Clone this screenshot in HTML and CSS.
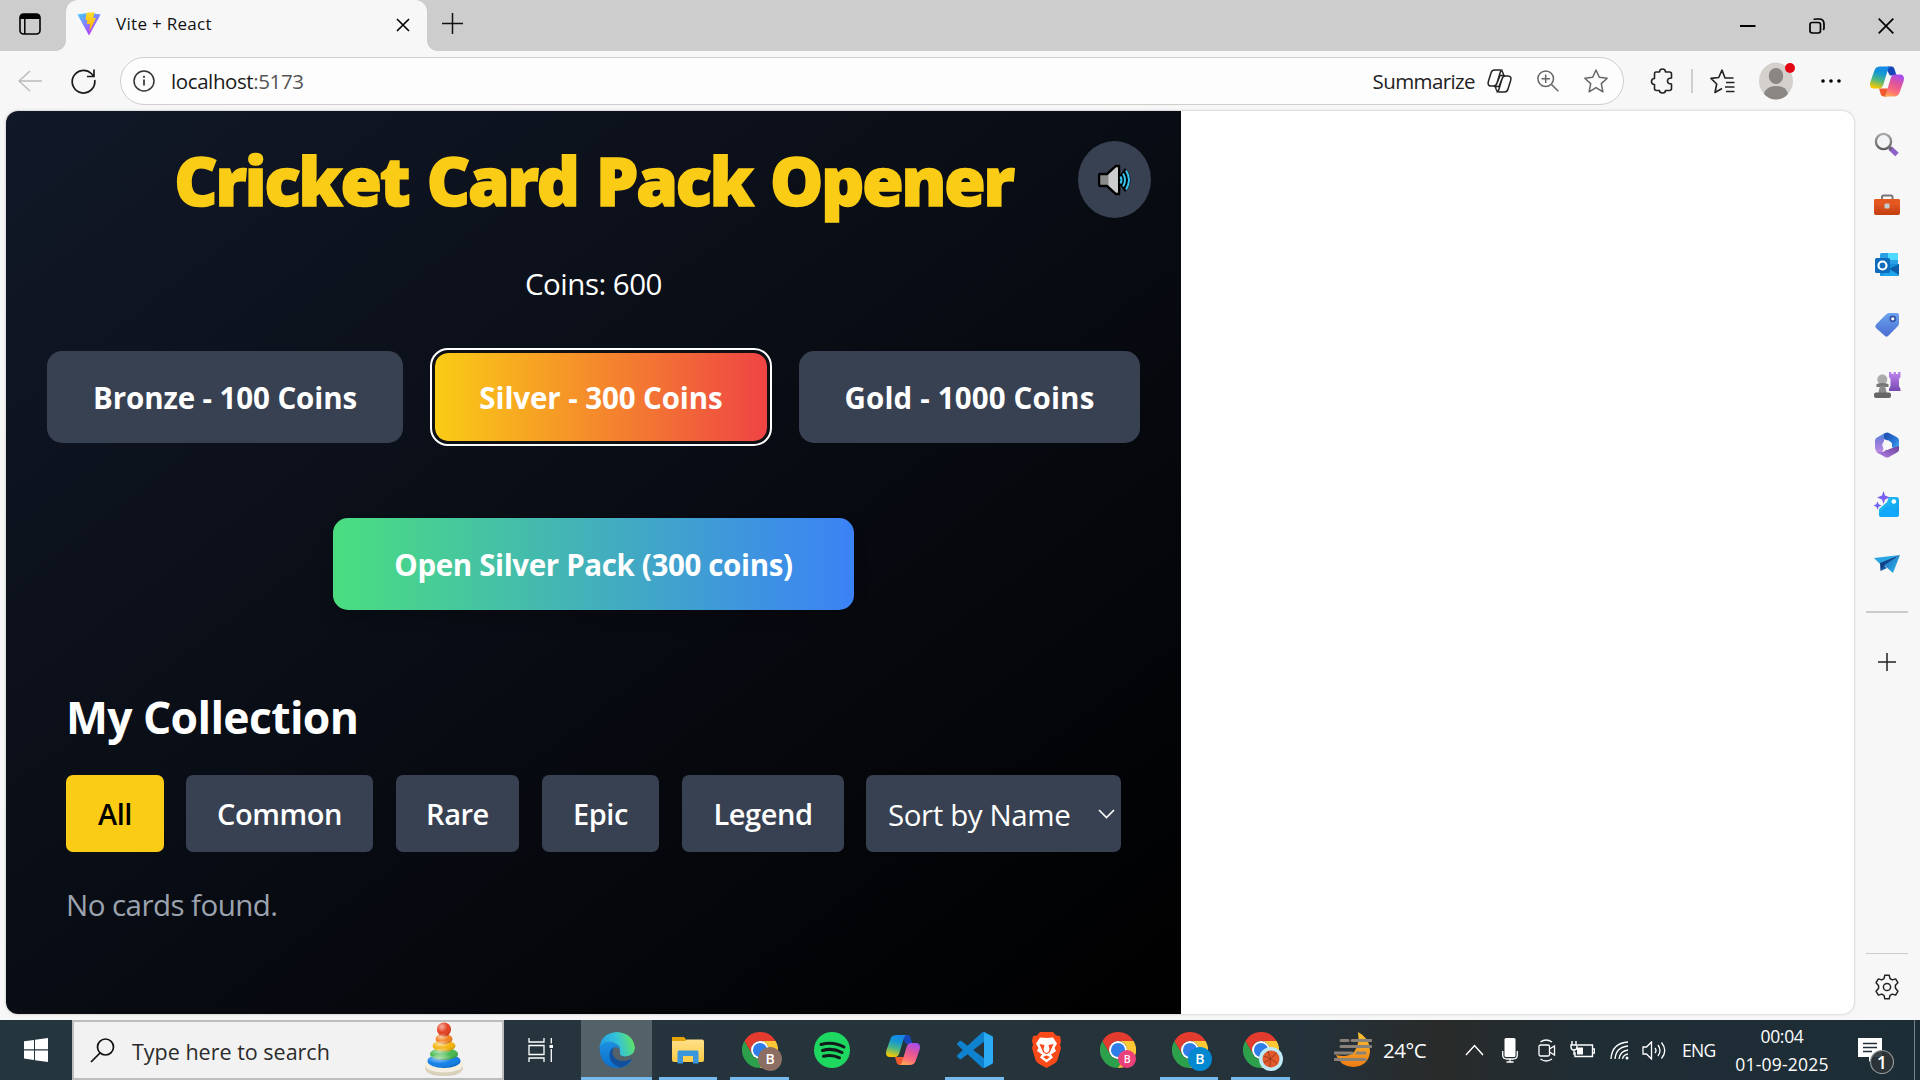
FILE: index.html
```html
<!DOCTYPE html>
<html lang="en">
<head>
<meta charset="utf-8">
<title>Vite + React</title>
<link rel="stylesheet" href="styles.css">
</head>
<body>
<svg class="defs" width="0" height="0" aria-hidden="true">
  <defs>
    <linearGradient id="cpA" x1="0.6" y1="0" x2="0.35" y2="1"><stop offset="0" stop-color="#1686e8"/><stop offset=".3" stop-color="#1497d4"/><stop offset=".62" stop-color="#4cb782"/><stop offset="1" stop-color="#fbc800"/></linearGradient>
    <linearGradient id="cpB" x1="0.7" y1="0" x2="0.35" y2="1"><stop offset="0" stop-color="#a74df0"/><stop offset=".4" stop-color="#e0549b"/><stop offset=".75" stop-color="#fb6d7a"/><stop offset="1" stop-color="#ffa256"/></linearGradient>
    <linearGradient id="edA" x1="0" y1=".5" x2="1" y2=".3"><stop offset="0" stop-color="#1d9de4"/><stop offset=".5" stop-color="#34c1dc"/><stop offset="1" stop-color="#63e85a"/></linearGradient>
    <linearGradient id="edB" x1="0" y1="0" x2="0" y2="1"><stop offset="0" stop-color="#1d8fe0"/><stop offset="1" stop-color="#0b70cf"/></linearGradient>
    <linearGradient id="viteA" x1="0" y1="0" x2=".6" y2="1"><stop offset="0" stop-color="#41d1ff"/><stop offset="1" stop-color="#bd34fe"/></linearGradient>
    <linearGradient id="viteB" x1="0" y1="0" x2="0" y2="1"><stop offset="0" stop-color="#ffde2f"/><stop offset="1" stop-color="#ffa800"/></linearGradient>
    <linearGradient id="moon" x1="0" y1="0" x2="0" y2="1"><stop offset="0" stop-color="#f8c431"/><stop offset="1" stop-color="#f07c14"/></linearGradient>
    <linearGradient id="purple" x1="0" y1="0" x2="0" y2="1"><stop offset="0" stop-color="#bf85ef"/><stop offset="1" stop-color="#7648b0"/></linearGradient>
    <linearGradient id="grey" x1="0" y1="0" x2="0" y2="1"><stop offset="0" stop-color="#a8a8a8"/><stop offset="1" stop-color="#606060"/></linearGradient>
    <linearGradient id="tag" x1="0" y1="0" x2="0" y2="1"><stop offset="0" stop-color="#6ba4ee"/><stop offset="1" stop-color="#4a6cd0"/></linearGradient>
    <linearGradient id="boxr" x1="0" y1="0" x2="0" y2="1"><stop offset="0" stop-color="#ee6430"/><stop offset="1" stop-color="#c33d0d"/></linearGradient>
    <linearGradient id="pic" x1="0" y1="0" x2="1" y2="1"><stop offset="0" stop-color="#25c4ee"/><stop offset="1" stop-color="#0d9bf2"/></linearGradient>
    <linearGradient id="plane" x1="0" y1="0" x2="1" y2="1"><stop offset="0" stop-color="#1b62b8"/><stop offset="1" stop-color="#30c0f2"/></linearGradient>
    <linearGradient id="folder" x1="0" y1="0" x2="0" y2="1"><stop offset="0" stop-color="#ffe08a"/><stop offset="1" stop-color="#fccb45"/></linearGradient>
    <linearGradient id="mL" x1="0" y1="0" x2="0" y2="1"><stop offset="0" stop-color="#3b8be0"/><stop offset=".45" stop-color="#8d7bd8"/><stop offset="1" stop-color="#c08be6"/></linearGradient>
    <linearGradient id="mR" x1="0" y1="0" x2="1" y2="1"><stop offset="0" stop-color="#1c49a8"/><stop offset=".6" stop-color="#2a7bdc"/><stop offset="1" stop-color="#58c2f4"/></linearGradient>
    <linearGradient id="mB" x1="0" y1="1" x2="1" y2="0"><stop offset="0" stop-color="#b583e2"/><stop offset="1" stop-color="#6a3f9e"/></linearGradient>
    <radialGradient id="shine" cx=".35" cy=".3" r=".7"><stop offset="0" stop-color="#fff" stop-opacity=".6"/><stop offset=".6" stop-color="#fff" stop-opacity="0"/><stop offset="1" stop-color="#000" stop-opacity=".15"/></radialGradient>
    <symbol id="copilot" viewBox="0 0 34 30">
      <path d="M18 0H21C24 0 24.500 2 25.300 5L26.500 9H20C17 4 16 2 18 0Z" fill="#1746b8"/>
      <path d="M9 22 L10.500 27C11 29 12 30 14 30H17L18 22Z" fill="#f0582d"/>
      <path d="M10.500 0H20.500C18.500 .8 18 2.500 17.300 5L13.700 17C12.800 20 11.800 22 8.500 22H4C0 22-.6 18.500 .5 15L4.300 4.200C5.300 1.200 7 0 10.500 0Z" fill="url(#cpA)"/>
      <path d="M23.500 30H13.500C15.500 29.200 16 27.500 16.700 25L20.300 13C21.200 10 22.200 8 25.500 8H30C34 8 34.600 11.500 33.500 15L29.700 25.800C28.700 28.800 27 30 23.500 30Z" fill="url(#cpB)"/>
    </symbol>
    <symbol id="chrome" viewBox="0 0 48 48">
      <path d="M3.200 12A24 24 0 0 1 44.800 12H24A12 12 0 0 0 13.600 30Z" fill="#e33b2e"/>
      <path d="M3.200 12L13.600 30A12 12 0 0 0 34.400 30L24 48A24 24 0 0 1 3.200 12Z" fill="#2da04b"/>
      <path d="M44.800 12A24 24 0 0 1 24 48L34.400 30A12 12 0 0 0 24 12Z" fill="#fcc934"/>
      <circle cx="24" cy="24" r="12" fill="#fff"/><circle cx="24" cy="24" r="9.400" fill="#2f7de9"/>
    </symbol>
  </defs>
</svg>

<div class="screen">
  <header class="tabstrip">
    <div class="tab-actions">
      <svg width="22" height="22" viewBox="0 0 22 22"><rect x="1" y="1" width="20" height="20" rx="3.500" fill="none" stroke="#000" stroke-width="1.600"/><path d="M1 6V4Q1 1 4 1H18Q21 1 21 4V6Z"/><path d="M5.800 5V21" stroke="#000" stroke-width="1.500"/></svg>
    </div>
    <div class="tab">
      <svg width="24" height="24" viewBox="0 0 24 24"><path d="M.5 2.500L12 .8L23.600 2.500L12 23.600Z" fill="url(#viteA)"/><path d="M9.500 1L17.500 0L16.200 6H19L12.500 19.500L13 12H9.800L10.300 8H8.500Z" fill="url(#viteB)"/></svg>
      <span class="tab-title">Vite + React</span>
      <svg class="tab-close" width="14" height="14" viewBox="0 0 14 14"><path d="M1 1L13 13M13 1L1 13" stroke="#000" stroke-width="1.600"/></svg>
    </div>
    <svg class="new-tab" width="21" height="21" viewBox="0 0 21 21"><path d="M10.500 0V21M0 10.500H21" stroke="#111" stroke-width="1.500"/></svg>
    <div class="window-controls">
      <svg width="16" height="16" viewBox="0 0 16 16"><path d="M0 8H15.500" stroke="#000" stroke-width="2"/></svg>
      <svg width="16" height="16" viewBox="0 0 16 16"><rect x="1" y="4.500" width="10.500" height="10.500" rx="2.200" fill="none" stroke="#000" stroke-width="1.700"/><path d="M4.500 1.500Q5 1 8 1H10Q15 1 15 6V10Q15 11 14.300 12" fill="none" stroke="#000" stroke-width="1.700"/></svg>
      <svg width="16" height="16" viewBox="0 0 16 16"><path d="M.7 .7L15.300 15.300M15.300 .7L.7 15.300" stroke="#000" stroke-width="1.700"/></svg>
    </div>
  </header>

  <div class="toolbar">
    <svg class="back" width="24" height="22" viewBox="0 0 24 22" fill="none" stroke="#bbb" stroke-width="1.500"><path d="M24 11H1M12 1L1 11L12 21"/></svg>
    <svg class="reload" width="25" height="25" viewBox="0 0 25 25" fill="none" stroke="#1a1a1a" stroke-width="1.700"><path d="M23.700 11A11.300 11.300 0 1 1 20.300 4.500L23 7.500M23 .5V7.500H16"/></svg>
    <div class="address">
      <svg width="22" height="22" viewBox="0 0 22 22"><circle cx="11" cy="11" r="10" fill="none" stroke="#333" stroke-width="1.500"/><path d="M11 9.500V15.500" stroke="#333" stroke-width="1.700"/><circle cx="11" cy="6.800" r="1.100" fill="#333"/></svg>
      <span class="url">localhost<i>:5173</i></span>
      <span class="summarize">Summarize</span>
      <svg class="ic-cp" width="25" height="24" viewBox="0 0 25 24" fill="none" stroke="#222" stroke-width="1.500"><path d="M7.500 1H13C15.500 1 16 3 16.500 6M7.500 1C5.500 1 4.500 2 4 4L1.500 12C.5 15.500 1.500 17 4 17H6.500C8.500 17 9.500 16 10 14L13 4C13.500 2 14 1 15.500 1M17.500 23H12C9.500 23 9 21 8.500 18M17.500 23C19.500 23 20.500 22 21 20L23.500 12C24.500 8.500 23.500 7 21 7H18.500C16.500 7 15.500 8 15 10L12 20C11.500 22 11 23 9.500 23M10.500 13L13 6.500H18M7 17.500H12L14.500 11"/></svg>
      <svg class="ic-zoom" width="22" height="22" viewBox="0 0 22 22" fill="none" stroke="#666" stroke-width="1.500"><circle cx="8.700" cy="8.700" r="7.800"/><path d="M14.500 14.500L21.300 21.300M8.700 4.500V13M4.500 8.700H13"/></svg>
      <svg class="ic-star" width="24" height="24" viewBox="0 0 24 24" fill="none" stroke="#666" stroke-width="1.500" stroke-linejoin="round"><path d="M12 1L15.300 8.300L23.200 9.200L17.300 14.600L18.900 22.800L12 18.600L5.100 22.800L6.700 14.600L.8 9.200L8.700 8.300Z"/></svg>
    </div>
    <svg class="ic-ext" width="24" height="26" viewBox="0 0 24 26" fill="none" stroke="#222" stroke-width="1.600" stroke-linejoin="round"><path d="M6 4H9.500C9.500 2 10.500 1 12.500 1S15.500 2 15.500 4H19.500Q21.500 4 21.500 6V10C19 10 17.500 11 17.500 13S19 16 21.500 16V20.500Q21.500 22.500 19.500 22.500H15.500C15.500 24.500 14.500 25 12.500 25S9.500 24.500 9.500 22.500H6.500Q4.500 22.500 4.500 20.500V16.500C2.500 16.500 1.500 15.500 1.500 13.500S2.500 10.500 4.500 10.500V6Q4.500 4 6 4"/></svg>
    <span class="divider"></span>
    <svg class="ic-fav" width="25" height="25" viewBox="0 0 25 25" fill="none" stroke="#222" stroke-width="1.600" stroke-linejoin="round"><path d="M23.500 9H15L12 1L8.700 8.500L1 9.400L6.700 15L5 23.500L12 19.500M16 13.500H24.500M15 18H24.500M16 22.500H24.500" /></svg>
    <div class="avatar">
      <svg width="34" height="38" viewBox="0 0 34 38"><ellipse cx="17" cy="19" rx="17" ry="18.500" fill="#d4d1cd"/><ellipse cx="17" cy="14" rx="7.200" ry="8" fill="#8a8683"/><path d="M5 32Q7 24 17 24T29 32Q24 37.500 17 37.500T5 32" fill="#8a8683"/></svg>
      <span class="dot"></span>
    </div>
    <svg class="ic-more" width="20" height="4" viewBox="0 0 20 4"><circle cx="2" cy="2" r="1.800"/><circle cx="10" cy="2" r="1.800"/><circle cx="18" cy="2" r="1.800"/></svg>
    <svg class="ic-copilot" width="34" height="31"><use href="#copilot"/></svg>
  </div>

  <div class="body">
    <main class="viewport">
      <section class="app">
        <button class="sound" aria-label="Sound"><svg width="36" height="32" viewBox="0 0 36 32"><path d="M2 10H9L18 2H21V30H18L9 22H2Q1 22 1 20V12Q1 10 2 10Z" fill="#8b8b8b" stroke="#000" stroke-width="2.500" stroke-linejoin="round"/><path d="M10.500 10.500L18 3.500H20V28.500H18L10.500 21.500Z" fill="#cdcdcd"/><path d="M22 11L27 4Q38 16 27 28L22 21Z" fill="#000"/><path d="M22.500 12.500Q24.500 16 22.500 19.500M25 9.500Q29 16 25 22.500M28 6.500Q34 16 28 25.500" fill="none" stroke="#35c5f0" stroke-width="2"/></svg></button>
        <h1>Cricket Card Pack Opener</h1>
        <p class="coins">Coins: 600</p>
        <div class="packs">
          <button class="pack bronze">Bronze - 100 Coins</button>
          <button class="pack silver">Silver - 300 Coins</button>
          <button class="pack gold">Gold - 1000 Coins</button>
        </div>
        <button class="open">Open Silver Pack (300 coins)</button>
        <h2>My Collection</h2>
        <div class="filters">
          <button class="filter all">All</button>
          <button class="filter common">Common</button>
          <button class="filter rare">Rare</button>
          <button class="filter epic">Epic</button>
          <button class="filter legend">Legend</button>
          <div class="sort"><span>Sort by Name</span><svg width="17" height="10" viewBox="0 0 17 10"><path d="M1 1L8.500 8.500L16 1" fill="none" stroke="#fff" stroke-width="1.600"/></svg></div>
        </div>
        <p class="empty">No cards found.</p>
      </section>
    </main>
    <aside class="sidebar">
      <div class="slot"><svg width="26" height="26" viewBox="0 0 26 26"><path d="M16 16L23 22.500" stroke="#8f5fca" stroke-width="5"/><path d="M14.500 14.500L17.500 17.500" stroke="#666" stroke-width="2.500"/><circle cx="9.500" cy="9.500" r="7.600" fill="#f2f4f6" stroke="url(#grey)" stroke-width="2.400"/></svg></div>
      <div class="slot"><svg width="28" height="24" viewBox="0 0 28 24"><path d="M9 7V4Q9 2.500 10.500 2.500H18Q19.500 2.500 19.500 4V7" fill="none" stroke="#777" stroke-width="2"/><rect x="1" y="6" width="26" height="16" rx="2" fill="url(#boxr)"/><rect x="1" y="6" width="26" height="6" rx="1.500" fill="#e4571f"/><rect x="11.500" y="10.500" width="5" height="5" rx="1" fill="#c3ccd0"/></svg></div>
      <div class="slot"><svg width="26" height="26" viewBox="0 0 26 26"><rect x="6" y="1" width="18" height="12" rx="1.500" fill="#2a9fe6"/><rect x="14" y="1" width="10" height="7" fill="#50d9ff"/><path d="M6 12H25V23Q25 24 24 24H7Q6 24 6 23Z" fill="#1490df"/><path d="M25 12V23L15 17Z" fill="#0c5ea8"/><path d="M25 23L15 17L7 24H24Z" fill="#1da4ea"/><rect x="1" y="6" width="15" height="15" rx="1.500" fill="#0f6cbd"/><circle cx="8.500" cy="13.500" r="4" fill="none" stroke="#fff" stroke-width="2.200"/></svg></div>
      <div class="slot"><svg width="26" height="26" viewBox="0 0 26 26"><path d="M15 1H23Q25 1 25 3V11Q25 13 24 14L14 24Q12.500 25.500 11 24L2 16Q.5 14.500 2 12.500L12 2.500Q13.500 1 15 1Z" fill="url(#tag)"/><circle cx="18.800" cy="6.800" r="2.500" fill="#fff" stroke="#3454a4" stroke-width="1.800"/></svg></div>
      <div class="slot"><svg width="28" height="28" viewBox="0 0 28 28"><path d="M16 1H18.500V3H20.500V1H23V3H25V1H27.500V6L26 8V15L27.500 18V20H16V18L17.500 15V8L16 6Z" fill="url(#purple)"/><circle cx="9.300" cy="8.500" r="5" fill="#aaa"/><path d="M3.500 13Q9.500 11 15.500 13V16H3.500Z" fill="#777"/><path d="M7 15H12L14 23H5Z" fill="#8a8a8a"/><rect x="1" y="21.500" width="17" height="5.500" rx="2" fill="#666"/></svg></div>
      <div class="slot"><svg width="26" height="28" viewBox="0 0 26 28"><path d="M11 2Q13 1 15 2L10 6V16L8 22L3 20.500Q1 19.500 1 17V9.500Q1 7.500 3 6.500Z" fill="url(#mL)"/><path d="M10 3L12 2Q13 1.400 15 2L23 6.300Q25 7.500 25 9.500V18Q25 20 23 21L18 16V12L10 8Z" fill="url(#mR)"/><path d="M2 20Q8 23 12 19L25 15V18.500Q25 20.500 23 21.600L15 26Q13 27 11 26L3 21.600Z" fill="url(#mB)"/><circle cx="13" cy="14" r="4.700" fill="#f7f7f7"/></svg></div>
      <div class="slot"><svg width="28" height="28" viewBox="0 0 28 28"><path d="M16 6H23Q26 6 26 9V23Q26 26 23 26H8Q6 26 6 23V18L14 11Z" fill="url(#pic)"/><path d="M6 23L13 16Q15.500 14 18 16L26 23Q26 26 23 26H8Q6 26 6 23Z" fill="#12a7fa"/><circle cx="20.800" cy="10.500" r="2.300" fill="#fff"/><path d="M10.500 0L12 4.500L17 6.500L12 8.500L10.500 13L9 8.500L4 6.500L9 4.500Z" fill="#7a5ff0"/><path d="M4.500 10.500L5.700 13.300L8.500 14.500L5.700 15.700L4.500 18.500L3.300 15.700L.5 14.500L3.300 13.300Z" fill="#6a63f0"/></svg></div>
      <div class="slot"><svg width="28" height="20" viewBox="0 0 28 20"><path d="M1 3L27 0L7 9Z" fill="#2aa5e2"/><path d="M7 8L27 0L11 12L7.500 16Z" fill="#123f86"/><path d="M11 10L27 0L20 18Z" fill="url(#plane)"/><path d="M7.500 16L11 11L14 13Z" fill="#0c5a9e"/></svg></div>
      <span class="rule"></span>
      <svg class="add" width="18" height="18" viewBox="0 0 18 18"><path d="M9 0V18M0 9H18" stroke="#222" stroke-width="1.500"/></svg>
      <span class="rule last"></span>
      <svg class="gear" width="26" height="26" viewBox="0 0 26 26" fill="none" stroke="#222" stroke-width="1.500" stroke-linejoin="round"><path d="M10.800 1.200H15.200L16 4.600L18.300 5.900L21.600 4.900L23.900 8.700L21.400 11.200V14L23.900 17.300L21.600 21.100L18.300 20.100L16 21.400L15.200 24.800H10.800L10 21.400L7.700 20.100L4.400 21.100L2.100 17.300L4.600 14.300V11.700L2.100 8.700L4.400 4.900L7.700 5.900L10 4.600Z"/><circle cx="13" cy="13" r="3.600"/></svg>
    </aside>
  </div>

  <footer class="taskbar">
    <div class="start"><svg width="24" height="24" viewBox="0 0 24 24" fill="#fff"><path d="M0 3.300L10 1.900V11.300H0ZM11 1.700L24 0V11.300H11ZM0 12.400H10V22L0 20.600ZM11 12.400H24V24L11 22.300Z"/></svg></div>
    <div class="search">
      <svg width="25" height="25" viewBox="0 0 25 25" fill="none" stroke="#111" stroke-width="1.700"><circle cx="15.500" cy="9" r="8"/><path d="M10 15L1 24"/></svg>
      <span>Type here to search</span>
      <svg class="toy" width="40" height="56" viewBox="0 0 40 56"><path d="M1 42H39V46Q38 54 20 54T1 46Z" fill="#d8d2bd"/><ellipse cx="20" cy="43" rx="19" ry="7.500" fill="#f3eee0"/><ellipse cx="20" cy="39" rx="16.500" ry="7" fill="#117fe8"/><ellipse cx="20" cy="32" rx="14" ry="6" fill="#46b94d"/><ellipse cx="20" cy="24" rx="11.500" ry="5.500" fill="#f3b40c"/><ellipse cx="20" cy="17" rx="8.500" ry="5" fill="#f58220"/><circle cx="20" cy="7.500" r="7" fill="#e54120"/><g fill="url(#shine)"><ellipse cx="20" cy="39" rx="16.500" ry="7"/><ellipse cx="20" cy="32" rx="14" ry="6"/><ellipse cx="20" cy="24" rx="11.500" ry="5.500"/><ellipse cx="20" cy="17" rx="8.500" ry="5"/><circle cx="20" cy="7.500" r="7"/></g></svg>
    </div>
    <div class="taskview"><svg width="25" height="24" viewBox="0 0 25 24" fill="none" stroke="#fff" stroke-width="1.300"><path d="M1 0V4H16V0M1 24V20H16V24M1 7.500H16V16.500H1ZM23.300 0V5.500M23.300 11V24"/><path d="M21.500 7H25V10H21.500Z" fill="#fff" stroke="none"/></svg></div>
    <nav class="apps">
      <div class="app-slot active running"><svg width="36" height="36" viewBox="0 0 36 36"><path d="M.5 16Q2 1 18 0Q34 1 36 16Q35 24 26 24.500Q20 24 21 20Q22 12 12 10Q4 10 .5 16Z" fill="url(#edA)"/><path d="M.5 15Q5 9 12 10Q20 11 21 18Q17 12 13 18Q11 28 22 31Q28 32 33 28Q28 36 18 36Q1 35 .5 15Z" fill="url(#edB)"/><path d="M15 15Q12 20 15 25Q21 32 33 27Q29 34 21 35.500Q10 32 10.500 22Q11 17 15 15Z" fill="#124f9c"/></svg></div>
      <div class="app-slot running"><svg width="34" height="28" viewBox="0 0 34 28"><path d="M1 1H13L15.500 4H32V10H1Z" fill="#e5a50a"/><path d="M1 5H14L16 3.500H31Q33 3.500 33 5.500V24Q33 26 31 26H3Q1 26 1 24Z" fill="url(#folder)"/><path d="M6.500 27.500V16Q6.500 14.500 8 14.500H26Q27.500 14.500 27.500 16V27.500H22V20H12V27.500Z" fill="#3a96dd"/></svg></div>
      <div class="app-slot running"><svg width="36" height="36"><use href="#chrome"/></svg><b class="badge brown">B</b></div>
      <div class="app-slot"><svg width="36" height="36" viewBox="0 0 36 36"><circle cx="18" cy="18" r="18" fill="#1ed760"/><path d="M7 12.500Q19 9 30 15M8.500 18.500Q18.500 15.500 28 20.500M9.500 24.300Q18 22 25.500 25.800" fill="none" stroke="#12191b" stroke-width="3" stroke-linecap="round"/></svg></div>
      <div class="app-slot"><svg width="34" height="30"><use href="#copilot"/></svg></div>
      <div class="app-slot running"><svg width="36" height="36" viewBox="0 0 24 24"><path d="M23.150 2.587L18.210.21a1.494 1.494 0 0 0-1.705.29l-9.460 8.630-4.120-3.128a.999.999 0 0 0-1.276.057L.327 7.261A1 1 0 0 0 .326 8.740L3.899 12 .326 15.260a1 1 0 0 0 .001 1.479L1.650 17.940a.999.999 0 0 0 1.276.057l4.120-3.128 9.460 8.630a1.492 1.492 0 0 0 1.704.29l4.942-2.377A1.500 1.500 0 0 0 24 20.060V3.939a1.500 1.500 0 0 0-.85-1.352zm-5.146 14.861L10.826 12l7.178-5.448v10.896z" fill="#0f82cf"/><path d="M18 0L23.150 2.587Q24 3 24 3.939V20.060Q24 21 23.150 21.400L18 24Z" fill="#2aaaf2"/></svg></div>
      <div class="app-slot"><svg width="31" height="36" viewBox="0 0 31 36"><path d="M9 0H22L25 3.500L29 4L30 9L29 13L30 16L26.500 28Q25.500 30 23.500 31.500L15.500 36L7.500 31.500Q5.500 30 4.500 28L1 16L2 13L1 9L2 4L6 3.500Z" fill="#fb4a1a"/><path d="M15.500 6L22 5.500L26 11.500L23.500 16L25 19L20 22.500L22 25.500L15.500 30.500L9 25.500L11 22.500L6 19L7.500 16L5 11.500L9 5.500Z" fill="#fff"/><path d="M8.500 12L13.500 13L12.500 17L13.500 20L15.500 21L17.500 20L18.500 17L17.500 13L22.500 12L21 15.500L18.700 20.500L15.500 22.300L12.300 20.500L10 15.500ZM12 25L15.500 23.500L19 25L15.500 27.500Z" fill="#fb4a1a"/></svg></div>
      <div class="app-slot"><svg width="36" height="36"><use href="#chrome"/></svg><b class="badge pink">B</b></div>
      <div class="app-slot running"><svg width="36" height="36"><use href="#chrome"/></svg><b class="badge blue">B</b></div>
      <div class="app-slot running"><svg width="36" height="36"><use href="#chrome"/></svg><span class="badge ball"><svg width="24" height="24" viewBox="0 0 24 24"><circle cx="12" cy="12" r="12" fill="#bdeaf5"/><circle cx="12" cy="12" r="8.500" fill="#e2592b"/><path d="M4.500 9Q12 10 18.500 17M9 4Q13 12 11 20M17.500 5.500Q13 12 5 16" fill="none" stroke="#8a3418" stroke-width=".8"/></svg></span></div>
    </nav>
    <div class="weather">
      <svg width="38" height="36" viewBox="0 0 38 36"><path d="M24 0Q36 6 36 19Q35 34 19 35Q6 34 2 23Q14 26 20 20Q26 12 24 0Z" fill="url(#moon)"/><path d="M7 8.500H14M18 8.500H37M7 14.500H37M1 21H18M23 21H31M1 27.500H31" stroke="#8a8178" stroke-width="3" stroke-linecap="round"/></svg>
      <span>24°C</span>
    </div>
    <div class="tray">
      <svg class="t-chev" width="19" height="12" viewBox="0 0 19 12"><path d="M1 11L9.500 1.500L18 11" fill="none" stroke="#fff" stroke-width="1.500"/></svg>
      <svg class="t-mic" width="16" height="25" viewBox="0 0 16 25"><rect x="2.500" y="0" width="11" height="19" rx="1.500" fill="#fff"/><path d="M.7 13V17Q.7 21 5 21H11Q15.300 21 15.300 17V13M8 21V24M4.500 24H11.500" fill="none" stroke="#fff" stroke-width="1.300"/></svg>
      <svg class="t-cam" width="18" height="23" viewBox="0 0 18 23" fill="none" stroke="#fff" stroke-width="1.300"><rect x="1" y="6" width="10.500" height="11" rx="1.500"/><path d="M11.500 10L16.500 7V16L11.500 13M2.500 3Q8 -1 14 3M2.500 20Q8 24 14 20"/></svg>
      <svg class="t-bat" width="25" height="18" viewBox="0 0 25 18" fill="none" stroke="#fff" stroke-width="1.400"><path d="M8 4H22.500V15.500H5V11M23 8H24.500V12H23"/><path d="M7 6.500H13V13.500H7Z" fill="#fff" stroke="none"/><path d="M2 0V4M6 0V4M1 4H7V6Q7 9 4 9T1 6ZM4 9V14" /></svg>
      <svg class="t-wifi" width="19" height="19" viewBox="0 0 19 19" fill="none" stroke="#fff" stroke-width="1.300"><path d="M1 18Q2 2 18 1M5 18Q6 6 18 5M9 18Q10 10 18 9" /><path d="M12.500 18Q13 14 18 13" /><circle cx="17" cy="17" r="1.500" fill="#fff" stroke="none"/></svg>
      <svg class="t-vol" width="24" height="19" viewBox="0 0 24 19" fill="none" stroke="#fff" stroke-width="1.300"><path d="M1 6H4.500L9.500 1V18L4.500 13H1ZM13 7Q15 9.500 13 12M16 4Q20 9.500 16 15M19.500 1.500Q26 9.500 19.500 17.500"/></svg>
      <span class="t-lang">ENG</span>
      <div class="clock"><span>00:04</span><span class="date">01-09-2025</span></div>
      <div class="notify"><svg width="36" height="36" viewBox="0 0 36 36"><path d="M0 0H24V19H15L11 24V19H0Z" fill="#fff"/><path d="M5 5.500H19M5 9.500H19M5 13.500H14" stroke="#213038" stroke-width="1.300"/><circle cx="24" cy="24" r="11.500" fill="#2c3437" fill-opacity=".93" stroke="#929799" stroke-width="1.200"/></svg><b>1</b></div>
    </div>
  </footer>
</div>
</body>
</html>
```
FILE: styles.css
```css
* { box-sizing: border-box; margin: 0; padding: 0; }
body { width: 1920px; height: 1080px; overflow: hidden; font-family: "Open Sans", "Noto Sans", sans-serif; background: #f7f7f7; color: #111; }
svg { display: block; flex: none; }
button { border: 0; font: inherit; color: inherit; }
span { white-space: nowrap; }
.defs { position: absolute; }
.screen { display: flex; flex-direction: column; width: 1920px; height: 1080px; }

.tabstrip { display: flex; align-items: center; height: 51px; background: radial-gradient(circle at 10px 0, #cdcdcd 9.500px, #f7f7f7 10px) 427px 41px / 10px 10px no-repeat, #cdcdcd; }
.tab-actions { width: 66px; height: 51px; padding: 13px 0 0 19px; background: radial-gradient(circle at 0 0, #cdcdcd 9.500px, #f7f7f7 10px) 56px 41px / 10px 10px no-repeat; }
.tab { display: flex; align-items: center; width: 361px; height: 51px; padding: 0 17px 3px 11px; background: #f7f7f7; border-radius: 12px 12px 0 0; }
.tab-title { margin: -2px 0 0 15px; font-size: 17px; letter-spacing: 0.3px; color: #111; }
.tab-close { margin-left: auto; margin-top: 2px; }
.new-tab { margin: -4px 0 0 15px; }
.window-controls { display: flex; gap: 53px; margin-left: auto; padding-right: 26px; }

.toolbar { display: flex; align-items: center; height: 60px; padding: 0 16px 0 18px; background: #f7f7f7; }
.reload { margin-left: 29px; }
.address { display: flex; align-items: center; width: 1504px; height: 48px; margin-left: 24px; padding: 0 15px 0 12px; border: 1.500px solid #cfcfcf; border-radius: 24px; background: #fdfdfd; }
.url { margin-left: 16px; font-size: 20.500px; letter-spacing: -0.4px; color: #1a1a1a; }
.url i { font-style: normal; color: #555; }
.summarize { margin-left: auto; font-size: 20.500px; color: #222; letter-spacing: -0.6px; }
.ic-cp { margin-left: 12px; }
.ic-zoom { margin-left: 25px; }
.ic-star { margin-left: 25px; }
.ic-ext { margin-left: 26px; }
.divider { width: 2px; height: 24px; margin-left: 17px; background: #cfcfcf; }
.ic-fav { margin-left: 17px; }
.avatar { position: relative; margin-left: 24px; }
.dot { position: absolute; right: -2px; top: 1px; width: 10px; height: 10px; border-radius: 50%; background: #e30613; }
.ic-more { margin-left: 28px; }
.ic-copilot { margin-left: auto; }

.body { display: flex; height: 909px; }
.viewport { display: flex; width: 1848px; height: 903px; margin-left: 6px; background: #fff; border-radius: 12px; overflow: hidden; box-shadow: 0 0 2px 1px #d8d8d8; }
.app { position: relative; display: flex; flex-direction: column; align-items: center; width: 1175px; height: 903px; padding-top: 31px; background: linear-gradient(to bottom right, #111827, #000); color: #fff; }
.sound { position: absolute; top: 30px; right: 30px; display: flex; align-items: center; justify-content: center; width: 73px; height: 77px; padding-left: 2px; border-radius: 50%; background: #384152; }
h1 { height: 76px; line-height: 77px; font-size: 67px; font-weight: 800; letter-spacing: -2.150px; word-spacing: 3px; color: #facc15; -webkit-text-stroke: 1.600px #facc15; white-space: nowrap; }
.coins { height: 45px; margin-top: 43px; line-height: 45px; font-size: 29.500px; letter-spacing: -0.5px; }
.packs { display: flex; gap: 30px; margin-top: 45px; }
.pack { height: 92px; padding-top: 1px; border-radius: 15px; background: #384152; font-size: 29.500px; font-weight: 700; white-space: nowrap; letter-spacing: -0.1px; }
.bronze { width: 356px; }
.silver { width: 336px; border: 2px solid #111; background: linear-gradient(to right, #facc15, #ef4444) padding-box; outline: 2px solid #fff; outline-offset: 1px; }
.gold { width: 341px; letter-spacing: 0.150px; }
.open { width: 521px; height: 92px; margin-top: 75px; padding-top: 1px; border-radius: 15px; background: linear-gradient(to right, #4ade80, #3b82f6); font-size: 29.500px; font-weight: 700; letter-spacing: -0.360px; white-space: nowrap; box-shadow: 0 10px 15px rgba(0,0,0,.15); }
h2 { align-self: flex-start; height: 60px; margin: 77px 0 0 60px; line-height: 60px; font-size: 44.500px; font-weight: 700; letter-spacing: -0.650px; white-space: nowrap; }
.filters { display: flex; gap: 23px; align-self: flex-start; margin: 28px 0 0 60px; }
.filter { height: 77px; border-radius: 7px; background: #384152; font-size: 29px; font-weight: 600; letter-spacing: -0.450px; }
.all { width: 98px; margin-right: -1px; background: #facc15; color: #000; }
.common { width: 187px; }
.rare { width: 123px; }
.epic { width: 117px; }
.legend { width: 162px; margin-right: -1px; }
.sort { display: flex; align-items: center; justify-content: space-between; width: 255px; height: 77px; padding: 0 6px 0 22px; border-radius: 7px; background: #384152; font-size: 29.500px; letter-spacing: -0.4px; }
.sort span { padding-top: 2px; }
.empty { align-self: flex-start; height: 45px; margin: 30px 0 0 60px; line-height: 45px; font-size: 29.500px; letter-spacing: -0.540px; color: #9ca3af; }

.sidebar { display: flex; flex-direction: column; align-items: center; width: 65px; padding: 4px 0 0; }
.slot { display: flex; align-items: center; justify-content: center; width: 60px; height: 60px; }
.rule { width: 42px; height: 1.500px; margin-top: 16px; background: #cbcbcb; }
.add { margin-top: 40px; }
.rule.last { margin-top: auto; }
.gear { margin: 20px 0 20px; }

.taskbar { display: flex; width: 1920px; height: 60px; color: #fff; background: linear-gradient(90deg, #25353e 0%, #25343d 30%, #26333a 60%, #24323b 68%, #292b2a 75%, #1f2d35 83%, #1d2d36 100%); }
.start { width: 72px; padding: 18px 0 0 24px; }
.search { display: flex; align-items: center; width: 432px; border: 2px solid #bdbdbd; background: #f2f2f2; color: #2b2b2b; padding-left: 16px; }
.search span { margin-left: 17px; padding-top: 2px; font-size: 21.500px; letter-spacing: 0; }
.toy { margin-left: auto; margin-right: 38px; }
.taskview { width: 77px; padding: 18px 0 0 24px; }
.apps { display: flex; width: 716px; }
.app-slot { position: relative; display: flex; align-items: center; justify-content: center; width: 71.600px; height: 60px; flex: none; }
.app-slot.running::after { content: ""; position: absolute; left: 6px; right: 7px; bottom: 0; height: 3px; background: #76b9ed; }
.app-slot.active { background: linear-gradient(90deg, #536168 98%, transparent 98%); }
.app-slot.active::after { left: 0; right: 1px; }
.badge { position: absolute; left: 34px; top: 27px; width: 24px; height: 24px; border-radius: 50%; font-size: 14px; font-weight: 600; line-height: 24px; text-align: center; color: #fff; }
.brown { background: #8d6e63; }
.pink { left: 36px; top: 30px; width: 18px; height: 18px; line-height: 18px; font-size: 10.500px; background: #ec407a; }
.blue { background: #0288d1; }
.weather { display: flex; align-items: center; margin-left: 37px; width: 131px; }
.weather span { margin-left: 11px; font-size: 20.500px; letter-spacing: -0.5px; }
.tray { display: flex; align-items: center; flex: 1; border-right: 1.500px solid #74808a; margin-right: 5px; }
.t-mic { margin-left: 18px; }
.t-cam { margin-left: 20px; }
.t-bat { margin-left: 14px; }
.t-wifi { margin-left: 15px; }
.t-vol { margin-left: 13px; }
.t-lang { width: 34px; margin-left: 16px; font-size: 17.500px; letter-spacing: -0.7px; }
.clock { display: flex; flex-direction: column; align-items: center; width: 96px; margin-left: 18px; font-size: 17.500px; line-height: 28px; letter-spacing: -0.3px; }
.date { letter-spacing: 0.2px; }
.notify { position: relative; margin-left: 28px; padding-top: 12px; }
.notify b { position: absolute; left: 12px; top: 24px; width: 24px; line-height: 24px; text-align: center; font-size: 18px; font-weight: 600; }
```
